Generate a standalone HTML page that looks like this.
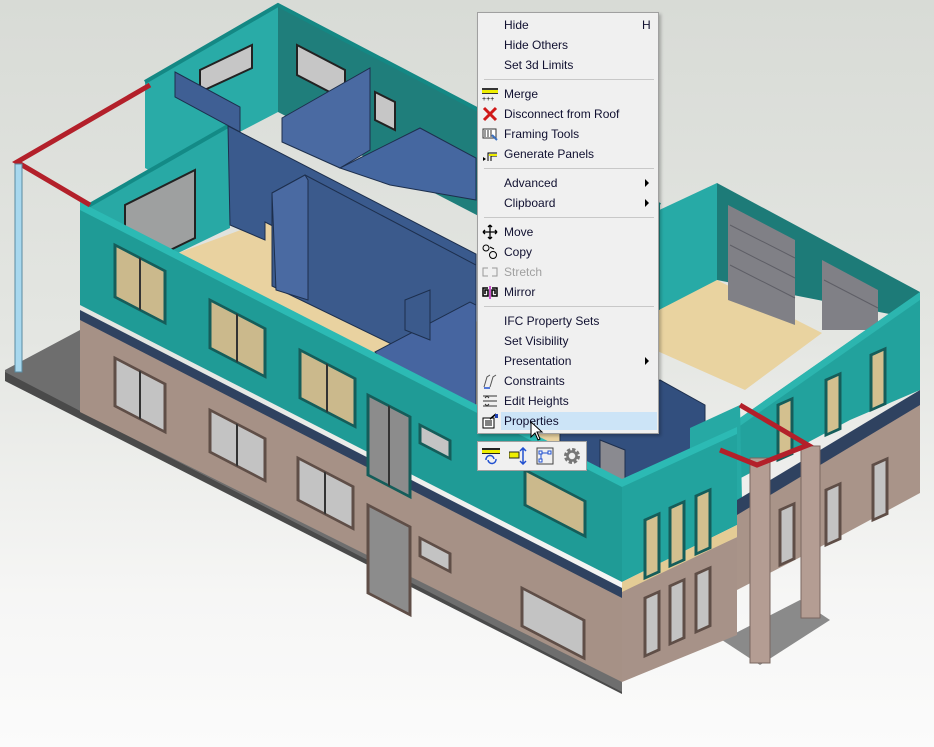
<!DOCTYPE html>
<html><head><meta charset="utf-8"><style>
html,body{margin:0;padding:0;}
body{width:934px;height:747px;position:relative;overflow:hidden;background:linear-gradient(180deg,#d8dbd6 0%,#e4e6e2 45%,#f6f6f5 80%,#fbfbfb 100%);font-family:"Liberation Sans",sans-serif;}
svg{position:absolute;left:0;top:0;}
.menu{position:absolute;left:477px;top:12px;width:180px;height:420px;background:#f0f0f0;border:1px solid #a0a0a0;box-shadow:2px 2px 3px rgba(0,0,0,.25);}
.it{position:absolute;left:26px;height:20px;line-height:20px;font-size:12px;color:#101030;white-space:nowrap;}
.sep{position:absolute;left:6px;width:170px;height:1px;background:#c8c8c8;}
.arr{position:absolute;left:167px;width:0;height:0;border-left:4px solid #000;border-top:4px solid transparent;border-bottom:4px solid transparent;}
.ic{position:absolute;left:4px;width:16px;height:16px;}
.tb{position:absolute;left:477px;top:441px;width:108px;height:28px;background:#f0f0f0;border:1px solid #a0a0a0;}
</style></head><body>
<svg width="934" height="747" viewBox="0 0 934 747">
<!-- slab -->
<polygon points="5,370 80,330 622,610 622,693 5,380" fill="#6e6e6e"/>
<polygon points="5,372 622,692 622,694 5,381" fill="#4a4a4a"/>
<!-- porch -->
<polygon points="722,640 800,600 830,620 760,665" fill="#8a8a8a"/>
<!-- garage back walls -->
<polygon points="717,183 920,292 920,320 717,280" fill="#1d7b78"/>
<polygon points="655,212 717,183 717,282 655,312" fill="#27aaa6"/>
<polygon points="655,312 717,280 822,333 745,390 655,350" fill="#e9d3a0"/>
<polygon points="728,205 795,240 795,325 728,300" fill="#808086"/>
<polygon points="822,260 878,290 878,330 822,330" fill="#808086"/>
<g stroke="#5e5e66" stroke-width="1"><line x1="730" y1="225" x2="795" y2="258"/><line x1="730" y1="245" x2="795" y2="278"/><line x1="730" y1="265" x2="795" y2="298"/><line x1="824" y1="280" x2="878" y2="308"/></g>
<!-- back teal walls upper -->
<polygon points="278,5 660,205 660,310 278,112" fill="#1f7e7b"/>
<polygon points="145,82 278,5 278,112 230,137 230,212 145,168" fill="#29aba7"/>
<polyline points="145,82 278,5 660,205" fill="none" stroke="#148884" stroke-width="4"/>
<polygon points="88,208 228,128 230,228 176,254 88,302" fill="#28a9a5"/>
<polyline points="88,206 228,126" fill="none" stroke="#138a86" stroke-width="4"/>
<!-- floor -->
<polygon points="170,256 268,220 700,430 622,482 120,230" fill="#e9d2a0"/>
<!-- windows in back -->
<polygon points="200,70 252,45 252,68 200,92" fill="#c6c6c6" stroke="#222" stroke-width="2"/>
<polygon points="297,45 345,70 345,100 297,75" fill="#c6c6c6" stroke="#222" stroke-width="2"/>
<polygon points="375,92 395,102 395,130 375,120" fill="#c6c6c6" stroke="#222" stroke-width="2"/>
<polygon points="125,205 195,170 195,238 125,272" fill="#9ea0a0" stroke="#222" stroke-width="2"/>
<!-- blue walls -->
<g stroke="#1d2f4d" stroke-width="1">
<polygon points="175,72 240,107 240,132 175,97" fill="#3f5f94"/>
<polygon points="228,126 476,254 476,330 265,222 265,240 230,225" fill="#3a5a8d"/>
<polygon points="282,118 370,68 370,150 340,168 282,142" fill="#4a6aa2"/>
<polygon points="340,168 420,128 476,158 476,200 390,185" fill="#4567a0"/>
<polygon points="272,193 305,175 476,265 476,385 272,286" fill="#3b5a8c"/>
<polygon points="272,193 305,175 308,180 308,300 276,290" fill="#4a6aa2"/>
<polygon points="375,352 470,302 476,305 476,440 430,418" fill="#4665a0"/>
<polygon points="405,300 430,290 430,340 405,330" fill="#3b5a8c"/>
<polygon points="560,428 660,380 705,405 705,470 622,482 560,462" fill="#324f7e"/>
<polygon points="600,440 625,450 625,490 600,480" fill="#8a8a90"/>
</g>
<!-- brown lower front -->
<polygon points="80,312 622,592 622,682 80,412" fill="#a69186"/>
<polygon points="80,310 622,588 622,598 80,320" fill="#2f4260"/>
<polygon points="622,590 737,537 737,635 622,682" fill="#a79288"/>
<!-- right block -->
<polygon points="737,513 920,400 920,493 820,547 737,590" fill="#a99489"/>
<polygon points="737,420 920,292 920,390 850,420 737,480" fill="#22a29d"/>
<polygon points="737,420 920,292 920,300 737,428" fill="#2cb5af"/>
<polygon points="690,428 740,405 742,500 690,522" fill="#26a9a4"/>
<polygon points="920,390 920,405 737,515 737,500" fill="#2f4260"/>
<!-- teal front -->
<polygon points="80,205 622,482 622,582 80,305" fill="#1f9b96"/>
<polygon points="80,202 622,479 622,487 80,210" fill="#2cbab4"/>
<polygon points="622,482 737,430 737,525 622,582" fill="#22a39e"/>
<polygon points="622,479 737,427 737,434 622,487" fill="#2cbab4"/>
<polygon points="622,582 737,525 737,537 622,592" fill="#e4cc95"/>
<!-- front windows teal -->
<g stroke="#155d5a" stroke-width="3">
<g transform="translate(115,245) skewY(27.47)"><rect width="50" height="52" fill="#cbb98c"/><line x1="25" y1="0" x2="25" y2="52" stroke="#333" stroke-width="2"/></g>
<g transform="translate(210,300) skewY(27.47)"><rect width="55" height="48" fill="#cbb98c"/><line x1="27" y1="0" x2="27" y2="48" stroke="#333" stroke-width="2"/></g>
<g transform="translate(300,350) skewY(27.47)"><rect width="55" height="48" fill="#cbb98c"/><line x1="27" y1="0" x2="27" y2="48" stroke="#333" stroke-width="2"/></g>
<g transform="translate(368,395) skewY(27.47)"><rect width="42" height="80" fill="#8c8c8c"/><line x1="21" y1="0" x2="21" y2="80" stroke="#333" stroke-width="2"/></g>
<g transform="translate(420,425) skewY(27.47)"><rect width="30" height="18" fill="#c4c4c4"/></g>
<g transform="translate(525,470) skewY(27.47)"><rect width="60" height="35" fill="#cbb98c"/></g>
</g>
<g stroke="#155d5a" stroke-width="3" fill="#d3c08f">
<g transform="translate(645,520) skewY(-24)"><rect width="14" height="58"/></g>
<g transform="translate(670,508) skewY(-24)"><rect width="14" height="58"/></g>
<g transform="translate(696,496) skewY(-24)"><rect width="14" height="58"/></g>
<g transform="translate(778,405) skewY(-24)"><rect width="14" height="55"/></g>
<g transform="translate(826,380) skewY(-24)"><rect width="14" height="55"/></g>
<g transform="translate(871,355) skewY(-24)"><rect width="14" height="55"/></g>
</g>
<!-- brown windows -->
<g stroke="#5f4e47" stroke-width="3" fill="#c3c3c3">
<g transform="translate(115,358) skewY(27.47)"><rect width="50" height="48"/><line x1="25" y1="0" x2="25" y2="48" stroke="#333" stroke-width="2"/></g>
<g transform="translate(210,410) skewY(27.47)"><rect width="55" height="42"/><line x1="27" y1="0" x2="27" y2="42" stroke="#333" stroke-width="2"/></g>
<g transform="translate(298,458) skewY(27.47)"><rect width="55" height="42"/><line x1="27" y1="0" x2="27" y2="42" stroke="#333" stroke-width="2"/></g>
<g transform="translate(368,505) skewY(27.47)"><rect width="42" height="88" fill="#8c8c8c"/></g>
<g transform="translate(420,538) skewY(27.47)"><rect width="30" height="18"/></g>
<g transform="translate(522,588) skewY(27.47)"><rect width="62" height="38"/></g>
<g transform="translate(645,598) skewY(-24)"><rect width="14" height="58"/></g>
<g transform="translate(670,586) skewY(-24)"><rect width="14" height="58"/></g>
<g transform="translate(696,574) skewY(-24)"><rect width="14" height="58"/></g>
<g transform="translate(780,510) skewY(-24)"><rect width="14" height="55"/></g>
<g transform="translate(826,490) skewY(-24)"><rect width="14" height="55"/></g>
<g transform="translate(873,465) skewY(-24)"><rect width="14" height="55"/></g>
</g>
<!-- pillars -->
<rect x="750" y="458" width="20" height="205" fill="#b49d93" stroke="#7a6760"/>
<rect x="801" y="446" width="19" height="172" fill="#b49d93" stroke="#7a6760"/>
<!-- red beams & pole -->
<polyline points="90,205 17,162 150,85" fill="none" stroke="#b3202a" stroke-width="5"/>
<rect x="15" y="164" width="7" height="208" fill="#a8d8ee" stroke="#5a8aa0"/>
<polyline points="740,405 808,445 757,465 720,450" fill="none" stroke="#b3202a" stroke-width="5"/>
</svg>

<div class="menu">
<div class="it" style="top:2px">Hide</div><div class="it" style="top:2px;left:164px">H</div>
<div class="it" style="top:22px">Hide Others</div>
<div class="it" style="top:42px">Set 3d Limits</div>
<div class="sep" style="top:66px"></div>
<svg class="ic" style="top:73px" viewBox="0 0 16 16"><rect x="0" y="2" width="16" height="2" fill="#333"/><rect x="0" y="4" width="16" height="3" fill="#ee0"/><rect x="0" y="7" width="16" height="1" fill="#333"/><text x="0" y="15" font-size="7" fill="#000">+++</text></svg>
<div class="it" style="top:71px">Merge</div>
<svg class="ic" style="top:93px" viewBox="0 0 16 16"><path d="M2 2L14 14M14 2L2 14" stroke="#d01818" stroke-width="3"/></svg>
<div class="it" style="top:91px">Disconnect from Roof</div>
<svg class="ic" style="top:113px" viewBox="0 0 16 16"><rect x="1" y="3" width="13" height="9" fill="#fff" stroke="#333"/><path d="M3 4v7M6 4v7M9 4v7" stroke="#333"/><path d="M10 9l5 5" stroke="#3a70c0" stroke-width="2"/></svg>
<div class="it" style="top:111px">Framing Tools</div>
<svg class="ic" style="top:133px" viewBox="0 0 16 16"><path d="M6 15V7h9M9 15V10h6" stroke="#000" fill="none"/><rect x="7" y="8" width="8" height="2" fill="#ee0"/><path d="M1 11l3 2-3 2z" fill="#000"/></svg>
<div class="it" style="top:131px">Generate Panels</div>
<div class="sep" style="top:155px"></div>
<div class="it" style="top:160px">Advanced</div><div class="arr" style="top:166px"></div>
<div class="it" style="top:180px">Clipboard</div><div class="arr" style="top:186px"></div>
<div class="sep" style="top:204px"></div>
<svg class="ic" style="top:211px" viewBox="0 0 16 16"><path d="M8 1v14M1 8h14M8 1l-2 2M8 1l2 2M8 15l-2-2M8 15l2-2M1 8l2-2M1 8l2 2M15 8l-2-2M15 8l-2 2" stroke="#000" stroke-width="1.3" fill="none"/></svg>
<div class="it" style="top:209px">Move</div>
<svg class="ic" style="top:231px" viewBox="0 0 16 16"><circle cx="4" cy="4" r="3" fill="none" stroke="#000"/><circle cx="11" cy="11" r="3.5" fill="none" stroke="#000"/><path d="M8 3l4 2" stroke="#000"/></svg>
<div class="it" style="top:229px">Copy</div>
<svg class="ic" style="top:251px" viewBox="0 0 16 16"><path d="M6 4H1v8h5M10 4h5v8h-5" stroke="#999" fill="none"/></svg>
<div class="it" style="top:249px;color:#a0a0a0">Stretch</div>
<svg class="ic" style="top:271px" viewBox="0 0 16 16"><path d="M6 4H1v8h5V6H3v4M10 4h5v8h-5V6h3v4" stroke="#000" fill="none" stroke-width="1.5"/><path d="M8 2v13" stroke="#c020c0" stroke-width="1.5"/></svg>
<div class="it" style="top:269px">Mirror</div>
<div class="sep" style="top:293px"></div>
<div class="it" style="top:298px">IFC Property Sets</div>
<div class="it" style="top:318px">Set Visibility</div>
<div class="it" style="top:338px">Presentation</div><div class="arr" style="top:344px"></div>
<svg class="ic" style="top:360px" viewBox="0 0 16 16"><path d="M2 14l3-10 3-2M8 14l3-10 3-2" stroke="#555" fill="none"/><path d="M2 15h6" stroke="#2050d0" stroke-width="1.5"/></svg>
<div class="it" style="top:358px">Constraints</div>
<svg class="ic" style="top:380px" viewBox="0 0 16 16"><path d="M1 3h14M1 8h14M1 13h14M3 5l2-2 2 2M3 11l2 2 2-2" stroke="#333" fill="none"/></svg>
<div class="it" style="top:378px">Edit Heights</div>
<div style="position:absolute;left:23px;top:399px;width:156px;height:18px;background:#cce4f7"></div>
<svg class="ic" style="top:400px" viewBox="0 0 16 16"><rect x="1" y="5" width="11" height="10" fill="#fff" stroke="#000"/><path d="M3 8h7M3 10h7M3 12h7" stroke="#000"/><path d="M8 6l6-5" stroke="#000" stroke-width="1.5"/><rect x="13" y="1" width="3" height="4" fill="#2040b0"/></svg>
<div class="it" style="top:398px">Properties</div>
<svg style="position:absolute;left:52px;top:408px" width="14" height="20" viewBox="0 0 14 20"><path d="M1 1v15l4-4 3 7 2-1-3-7h5z" fill="#fff" stroke="#000"/></svg>
</div>
<div class="tb">
<svg style="position:absolute;left:4px;top:5px" width="18" height="18" viewBox="0 0 18 18"><rect x="0" y="1" width="18" height="2" fill="#222"/><rect x="0" y="3" width="18" height="3" fill="#ee0"/><rect x="0" y="6" width="18" height="1" fill="#222"/><path d="M4 13a4 4 0 0 1 8-1M14 12a4 4 0 0 1-8 1" stroke="#2050d0" fill="none" stroke-width="1.5"/></svg>
<svg style="position:absolute;left:31px;top:5px" width="18" height="18" viewBox="0 0 18 18"><rect x="0" y="5" width="10" height="6" fill="#ee0" stroke="#222"/><path d="M14 1v16M11 4l3-3 3 3M11 14l3 3 3-3" stroke="#2050d0" fill="none" stroke-width="1.5"/></svg>
<svg style="position:absolute;left:58px;top:5px" width="18" height="18" viewBox="0 0 18 18"><rect x="1" y="1" width="16" height="16" fill="none" stroke="#444"/><path d="M5 6h8M5 6v7" stroke="#2050d0"/><rect x="3" y="4" width="3" height="3" fill="#fff" stroke="#2050d0"/><rect x="12" y="4" width="3" height="3" fill="#fff" stroke="#2050d0"/><rect x="3" y="12" width="3" height="3" fill="#fff" stroke="#2050d0"/></svg>
<svg style="position:absolute;left:85px;top:5px" width="18" height="18" viewBox="0 0 18 18"><circle cx="9" cy="9" r="6" fill="none" stroke="#777" stroke-width="4" stroke-dasharray="3 1.7"/><circle cx="9" cy="9" r="4.5" fill="none" stroke="#777" stroke-width="2.5"/></svg>
</div>
</body></html>
